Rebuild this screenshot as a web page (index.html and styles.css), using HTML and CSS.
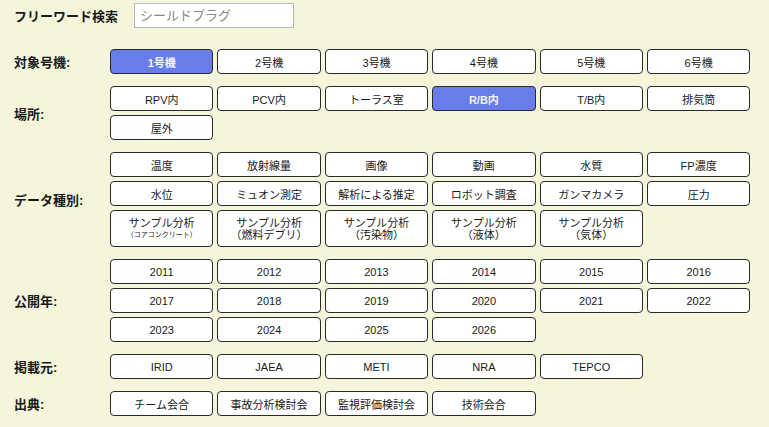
FILE: index.html
```html
<!DOCTYPE html>
<html lang="ja">
<head>
<meta charset="utf-8">
<title>検索</title>
<link rel="stylesheet" href="styles.css">
</head>
<body>
<div class="page">
  <div class="search-row">
    <label class="label search-label" for="q">フリーワード検索</label>
    <input id="q" class="search" type="text" placeholder="シールドプラグ">
  </div>
  <div class="filters">
    <div class="filter">
      <div class="label">対象号機:</div>
      <div class="chips">
        <button class="chip active">1号機</button>
        <button class="chip">2号機</button>
        <button class="chip">3号機</button>
        <button class="chip">4号機</button>
        <button class="chip">5号機</button>
        <button class="chip">6号機</button>
      </div>
    </div>
    <div class="filter">
      <div class="label">場所:</div>
      <div class="chips">
        <button class="chip">RPV内</button>
        <button class="chip">PCV内</button>
        <button class="chip">トーラス室</button>
        <button class="chip active">R/B内</button>
        <button class="chip">T/B内</button>
        <button class="chip">排気筒</button>
        <button class="chip">屋外</button>
      </div>
    </div>
    <div class="filter">
      <div class="label">データ種別:</div>
      <div class="chips">
        <button class="chip">温度</button>
        <button class="chip">放射線量</button>
        <button class="chip">画像</button>
        <button class="chip">動画</button>
        <button class="chip">水質</button>
        <button class="chip">FP濃度</button>
        <button class="chip">水位</button>
        <button class="chip">ミュオン測定</button>
        <button class="chip">解析による推定</button>
        <button class="chip">ロボット調査</button>
        <button class="chip">ガンマカメラ</button>
        <button class="chip">圧力</button>
        <button class="chip tall"><span>サンプル分析</span><span class="tiny">（コアコンクリート）</span></button>
        <button class="chip tall"><span>サンプル分析</span><span>（燃料デブリ）</span></button>
        <button class="chip tall"><span>サンプル分析</span><span>（汚染物）</span></button>
        <button class="chip tall"><span>サンプル分析</span><span>（液体）</span></button>
        <button class="chip tall"><span>サンプル分析</span><span>（気体）</span></button>
      </div>
    </div>
    <div class="filter">
      <div class="label">公開年:</div>
      <div class="chips">
        <button class="chip">2011</button>
        <button class="chip">2012</button>
        <button class="chip">2013</button>
        <button class="chip">2014</button>
        <button class="chip">2015</button>
        <button class="chip">2016</button>
        <button class="chip">2017</button>
        <button class="chip">2018</button>
        <button class="chip">2019</button>
        <button class="chip">2020</button>
        <button class="chip">2021</button>
        <button class="chip">2022</button>
        <button class="chip">2023</button>
        <button class="chip">2024</button>
        <button class="chip">2025</button>
        <button class="chip">2026</button>
      </div>
    </div>
    <div class="filter">
      <div class="label">掲載元:</div>
      <div class="chips">
        <button class="chip">IRID</button>
        <button class="chip">JAEA</button>
        <button class="chip">METI</button>
        <button class="chip">NRA</button>
        <button class="chip">TEPCO</button>
      </div>
    </div>
    <div class="filter">
      <div class="label">出典:</div>
      <div class="chips">
        <button class="chip">チーム会合</button>
        <button class="chip">事故分析検討会</button>
        <button class="chip">監視評価検討会</button>
        <button class="chip">技術会合</button>
      </div>
    </div>
  </div>
</div>
</body>
</html>
```

FILE: styles.css
```css
html, body {
  margin: 0;
  padding: 0;
  background: #f5f5dc;
}

body {
  font-family: "Liberation Sans", "Noto Sans CJK JP", sans-serif;
  color: #1a1a1a;
}

.page {
  padding: 3px 18px 0 14px;
}

.search-row {
  display: flex;
  align-items: center;
  height: 25px;
}

.label {
  font-size: 13px;
  font-weight: bold;
  color: #1a1a1a;
  width: 96px;
  flex: none;
}

.search-label {
  width: 120px;
}

.search {
  box-sizing: border-box;
  width: 160px;
  height: 25px;
  margin: 0;
  padding: 0 5px;
  border: 1px solid #b8b8b8;
  background: #fff;
  font-family: "Liberation Sans", "Noto Sans CJK JP", sans-serif;
  font-size: 13px;
  color: #333;
  outline: none;
}

.search::placeholder {
  color: #8a8a8a;
}

.filters {
  margin-top: 21px;
  display: flex;
  flex-direction: column;
  gap: 12px;
}

.filter {
  display: flex;
  align-items: center;
}

.chips {
  display: grid;
  grid-template-columns: repeat(6, 103.4px);
  column-gap: 4px;
  row-gap: 4px;
}

.chip {
  box-sizing: border-box;
  height: 25px;
  margin: 0;
  padding: 0 2px;
  border: 1px solid #2a2a2a;
  border-radius: 4px;
  background: #fff;
  font-family: "Liberation Sans", "Noto Sans CJK JP", sans-serif;
  font-size: 11px;
  color: #1a1a1a;
  display: flex;
  flex-direction: column;
  align-items: center;
  justify-content: center;
  cursor: pointer;
}

.chip.active {
  background: #687de9;
  color: #f4f4f8;
  font-weight: bold;
}

.chip.tall {
  height: 37px;
  line-height: 12px;
}

.chip .tiny {
  font-size: 7px;
  line-height: 12px;
}
```
